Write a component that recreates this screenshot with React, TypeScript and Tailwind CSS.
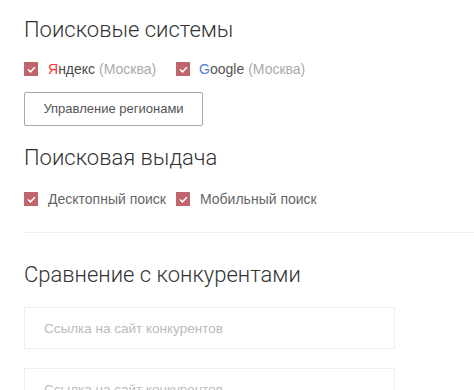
import { useState } from "react";

function Check({ checked, onChange }: { checked: boolean; onChange: () => void }) {
  return (
    <button
      onClick={onChange}
      className={`w-[14px] h-[14px] flex items-center justify-center shrink-0 ${
        checked ? "bg-[#c1656d]" : "bg-white border border-[#ccc]"
      }`}
    >
      {checked && (
        <svg width="9" height="7" viewBox="0 0 9 7" fill="none">
          <path d="M1 3.5L3.5 5.8L8 1.2" stroke="white" strokeWidth="1.6" />
        </svg>
      )}
    </button>
  );
}

export default function App() {
  const [state, setState] = useState({
    yandex: true,
    google: true,
    desktop: true,
    mobile: true,
  });
  const toggle = (k: keyof typeof state) =>
    setState((s) => ({ ...s, [k]: !s[k] }));

  return (
    <div className="bg-white w-[474px] h-[390px] overflow-hidden pl-6 font-['Roboto',sans-serif]">
      {/* Поисковые системы */}
      <h2 className="pt-[16px] text-[22px] leading-[28px] font-light text-[#333]">
        Поисковые системы
      </h2>
      <div className="mt-[17px] flex items-center h-[16px] text-[14px] font-['Liberation_Sans',sans-serif]">
        <Check checked={state.yandex} onChange={() => toggle("yandex")} />
        <span className="ml-[10px]">
          <span className="text-[#f33]">Я</span>
          <span className="text-[#4a4a4a]">ндекс</span>
          <span className="text-[#aaa]"> (Москва)</span>
        </span>
        <div className="ml-[20px]">
          <Check checked={state.google} onChange={() => toggle("google")} />
        </div>
        <span className="ml-[9px]">
          <span className="text-[#4a7fd8]">G</span>
          <span className="text-[#555]">oogle</span>
          <span className="text-[#aaa]"> (Москва)</span>
        </span>
      </div>
      <button className="mt-[15px] w-[179px] h-[34px] border border-[#a8a8a8] rounded-[2px] text-[13px] text-[#555] font-['Liberation_Sans',sans-serif]">
        Управление регионами
      </button>

      {/* Поисковая выдача */}
      <h2 className="mt-[18px] text-[22px] leading-[28px] font-light text-[#333]">
        Поисковая выдача
      </h2>
      <div className="mt-[19px] flex items-center h-[16px] text-[14px] text-[#666] font-['Liberation_Sans',sans-serif]">
        <Check checked={state.desktop} onChange={() => toggle("desktop")} />
        <span className="ml-[10px]">Десктопный поиск</span>
        <div className="ml-[10px]">
          <Check checked={state.mobile} onChange={() => toggle("mobile")} />
        </div>
        <span className="ml-[10px]">Мобильный поиск</span>
      </div>

      <div className="mt-[25px] border-t border-[#eee]" />

      {/* Сравнение с конкурентами */}
      <h2 className="mt-[28px] text-[22px] leading-[28px] font-light text-[#333]">
        Сравнение с конкурентами
      </h2>
      <div className="mt-[18px] flex flex-col gap-[19px]">
        <input
          placeholder="Ссылка на сайт конкурентов"
          className="w-[371px] h-[42px] border border-[#eee] px-[19px] text-[13.5px] font-['Liberation_Sans',sans-serif] placeholder:text-[#bbb] outline-none"
        />
        <input
          placeholder="Ссылка на сайт конкурентов"
          className="w-[371px] h-[42px] border border-[#eee] px-[19px] text-[13.5px] font-['Liberation_Sans',sans-serif] placeholder:text-[#bbb] outline-none"
        />
      </div>
    </div>
  );
}
